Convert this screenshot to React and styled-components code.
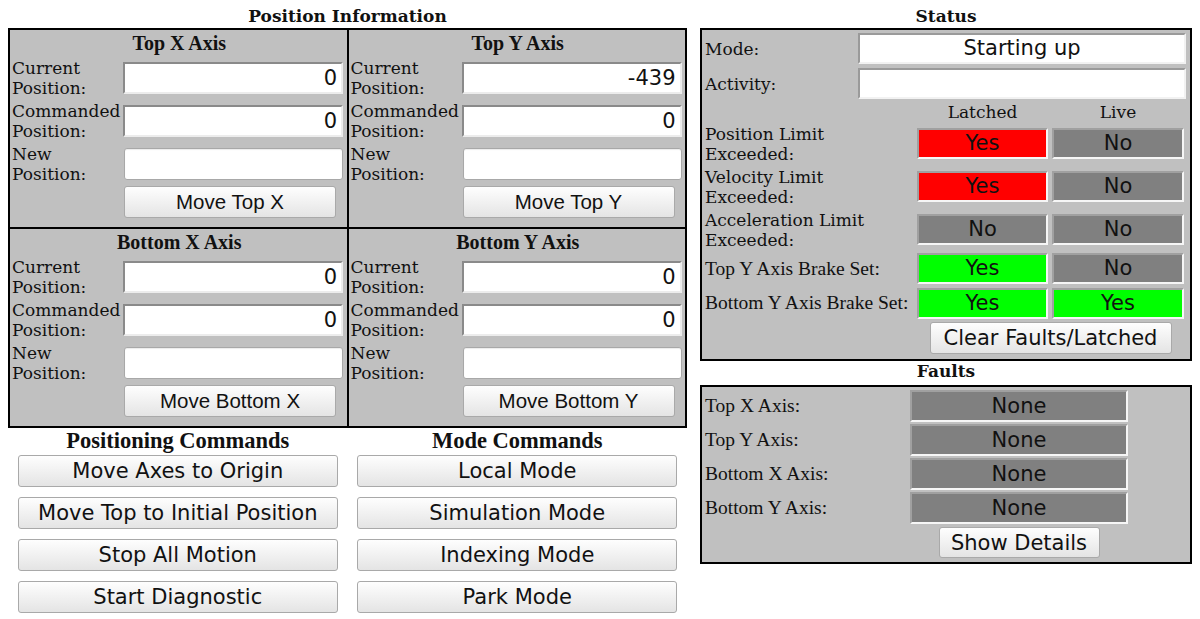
import React from 'react';
import styled, { createGlobalStyle, css } from 'styled-components';

const GlobalStyle = createGlobalStyle`
  html, body {
    margin: 0;
    padding: 0;
    background: #ffffff;
    color: #111111;
    font-family: "DejaVu Serif", serif;
  }
`;

const SERIF = '"DejaVu Serif", serif';
const TIMES = '"Liberation Serif", "Times New Roman", serif';
const SANS = '"DejaVu Sans", sans-serif';
const ARIAL = '"Liberation Sans", Arial, sans-serif';

const Page = styled.div`
  display: flex;
  align-items: flex-start;
  gap: 13px;
  padding: 6px 8px 0 8px;
`;

const LeftColumn = styled.div`
  width: 679px;
  display: flex;
  flex-direction: column;
`;

const RightColumn = styled.div`
  width: 492px;
  display: flex;
  flex-direction: column;
`;

const SectionTitle = styled.div`
  font-family: ${SERIF};
  font-weight: bold;
  font-size: 17px;
  text-align: center;
  height: ${(p) => p.$height || 22}px;
  line-height: 20px;
`;

const AxisGrid = styled.div`
  display: grid;
  grid-template-columns: 1fr 1fr;
  gap: 2px;
  background: #000;
  border: 2px solid #000;
`;

const AxisCell = styled.div`
  background: #c0c0c0;
  height: 197px;
  padding-left: 2px;
  box-sizing: border-box;
`;

const AxisTitle = styled.div`
  font-family: ${TIMES};
  font-weight: bold;
  font-size: 20px;
  text-align: center;
  height: 26px;
  line-height: 27px;
`;

const FieldRow = styled.div`
  display: grid;
  grid-template-columns: 111px 220px;
  align-items: center;
  height: ${(p) => p.$height || 43}px;
`;

const FieldLabel = styled.div`
  font-family: ${SERIF};
  font-size: 17px;
  line-height: 20px;
`;

const insetBorder = css`
  border-style: solid;
  border-width: 2px;
  border-color: #8a8a8a #ececec #ececec #8a8a8a;
`;

const Readout = styled.div`
  ${insetBorder};
  box-sizing: border-box;
  height: 32px;
  background: #fff;
  font-family: ${SANS};
  font-size: 21px;
  line-height: 28px;
  text-align: right;
  padding-right: 4px;
`;

const EntryInput = styled.input`
  box-sizing: border-box;
  width: 219px;
  height: 32px;
  margin-left: 1px;
  border: 1px solid #a8a8a8;
  border-radius: 3px;
  background: #fff;
  box-shadow: inset 0 1px 1px rgba(0, 0, 0, 0.08);
  font-family: ${SANS};
  font-size: 21px;
  padding: 0 4px;
  outline: none;
`;

const Button = styled.button`
  box-sizing: border-box;
  width: ${(p) => p.$width}px;
  height: ${(p) => p.$height || 32}px;
  margin: 0;
  padding: 0;
  border: 1px solid #a9a9a9;
  border-radius: 3px;
  background: linear-gradient(#fefefe, #e4e4e4);
  color: #111;
  font-family: ${(p) => (p.$arial ? ARIAL : SANS)};
  font-size: ${(p) => (p.$arial ? 20.5 : 21)}px;
  cursor: pointer;
  justify-self: ${(p) => p.$justify || 'start'};
  &:hover {
    background: linear-gradient(#ffffff, #ececec);
  }
`;

const AxisButton = styled(Button)`
  grid-column: 2;
  margin-left: 1px;
`;

const WideButton = styled(Button)`
  grid-column: 2 / 4;
`;

const CommandsGrid = styled.div`
  display: grid;
  grid-template-columns: 1fr 1fr;
`;

const CommandColumn = styled.div`
  display: flex;
  flex-direction: column;
  align-items: center;
  gap: 10px;
`;

const CommandTitle = styled.div`
  font-family: ${TIMES};
  font-weight: bold;
  font-size: 22.5px;
  height: 25px;
  line-height: 25px;
  margin-bottom: -8px;
`;

const Box = styled.div`
  border: 2px solid #000;
  background: #c0c0c0;
  padding: ${(p) => p.$padding};
`;

const ModeRow = styled.div`
  display: grid;
  grid-template-columns: 153px 328px;
  align-items: center;
  height: 35px;
`;

const ModeField = styled.div`
  ${insetBorder};
  border-color: #9a9a9a #f2f2f2 #f2f2f2 #9a9a9a;
  box-sizing: border-box;
  height: 31px;
  background: #fff;
  font-family: ${SANS};
  font-size: 21px;
  line-height: 27px;
  text-align: center;
`;

const StatusRow = styled.div`
  display: grid;
  grid-template-columns: 208px 131px 132px;
  column-gap: 4px;
  align-items: center;
  height: ${(p) => p.$height}px;
`;

const StatusLabel = styled.div`
  font-family: ${(p) => (p.$times ? TIMES : SERIF)};
  font-size: ${(p) => (p.$times ? 19.5 : 17)}px;
  line-height: ${(p) => (p.$times ? 22 : 20)}px;
  white-space: nowrap;
`;

const ColumnHead = styled.div`
  font-family: ${SERIF};
  font-size: 17px;
  text-align: center;
`;

const stateColors = {
  red: '#ff0000',
  green: '#00ff00',
  off: '#808080',
};

const Indicator = styled.div`
  box-sizing: border-box;
  height: ${(p) => p.$height || 31}px;
  border-style: solid;
  border-width: 2px;
  border-color: #a0a0a0 #f6f6f6 #f6f6f6 #a0a0a0;
  background: ${(p) => stateColors[p.$state]};
  font-family: ${SANS};
  font-size: 21px;
  line-height: ${(p) => (p.$height || 31) - 4}px;
  text-align: center;
  color: #111;
`;

const FaultRow = styled.div`
  display: grid;
  grid-template-columns: 205px 218px;
  align-items: center;
  height: ${(p) => p.$height || 34}px;
`;

const axes = [
  { name: 'Top X Axis', current: '0', commanded: '0', button: 'Move Top X' },
  { name: 'Top Y Axis', current: '-439', commanded: '0', button: 'Move Top Y' },
  { name: 'Bottom X Axis', current: '0', commanded: '0', button: 'Move Bottom X' },
  { name: 'Bottom Y Axis', current: '0', commanded: '0', button: 'Move Bottom Y' },
];

const positioningCommands = [
  'Move Axes to Origin',
  'Move Top to Initial Position',
  'Stop All Motion',
  'Start Diagnostic',
];

const modeCommands = ['Local Mode', 'Simulation Mode', 'Indexing Mode', 'Park Mode'];

const limits = [
  { label: ['Position Limit', 'Exceeded:'], latched: 'red', live: 'off', height: 43 },
  { label: ['Velocity Limit', 'Exceeded:'], latched: 'red', live: 'off', height: 43 },
  { label: ['Acceleration Limit', 'Exceeded:'], latched: 'off', live: 'off', height: 43 },
  { label: ['Top Y Axis Brake Set:'], latched: 'green', live: 'off', height: 35, times: true },
  { label: ['Bottom Y Axis Brake Set:'], latched: 'green', live: 'green', height: 34, times: true },
];

const faults = ['Top X Axis:', 'Top Y Axis:', 'Bottom X Axis:', 'Bottom Y Axis:'];

const yesNo = (state) => (state === 'off' ? 'No' : 'Yes');

const AxisPanel = ({ axis }) => (
  <AxisCell>
    <AxisTitle>{axis.name}</AxisTitle>
    <FieldRow>
      <FieldLabel>Current<br />Position:</FieldLabel>
      <Readout>{axis.current}</Readout>
    </FieldRow>
    <FieldRow>
      <FieldLabel>Commanded<br />Position:</FieldLabel>
      <Readout>{axis.commanded}</Readout>
    </FieldRow>
    <FieldRow>
      <FieldLabel>New<br />Position:</FieldLabel>
      <EntryInput type="text" />
    </FieldRow>
    <FieldRow $height={34}>
      <AxisButton $arial $width={212}>{axis.button}</AxisButton>
    </FieldRow>
  </AxisCell>
);

const App = () => {
  return (
    <>
      <GlobalStyle />
      <Page>
        <LeftColumn>
          <SectionTitle>Position Information</SectionTitle>
          <AxisGrid>
            {axes.map((axis) => (
              <AxisPanel key={axis.name} axis={axis} />
            ))}
          </AxisGrid>
          <CommandsGrid>
            <CommandColumn>
              <CommandTitle>Positioning Commands</CommandTitle>
              {positioningCommands.map((c) => (
                <Button key={c} $width={320}>{c}</Button>
              ))}
            </CommandColumn>
            <CommandColumn>
              <CommandTitle>Mode Commands</CommandTitle>
              {modeCommands.map((c) => (
                <Button key={c} $width={320}>{c}</Button>
              ))}
            </CommandColumn>
          </CommandsGrid>
        </LeftColumn>

        <RightColumn>
          <SectionTitle>Status</SectionTitle>
          <Box $padding="1px 4px 3px 3px">
            <ModeRow>
              <StatusLabel>Mode:</StatusLabel>
              <ModeField>Starting up</ModeField>
            </ModeRow>
            <ModeRow>
              <StatusLabel>Activity:</StatusLabel>
              <ModeField />
            </ModeRow>
            <StatusRow $height={21}>
              <span />
              <ColumnHead>Latched</ColumnHead>
              <ColumnHead>Live</ColumnHead>
            </StatusRow>
            {limits.map((row) => (
              <StatusRow key={row.label.join(' ')} $height={row.height}>
                <StatusLabel $times={row.times}>
                  {row.label.map((line, i) => (
                    <React.Fragment key={line}>
                      {i > 0 && <br />}
                      {line}
                    </React.Fragment>
                  ))}
                </StatusLabel>
                <Indicator $state={row.latched}>{yesNo(row.latched)}</Indicator>
                <Indicator $state={row.live}>{yesNo(row.live)}</Indicator>
              </StatusRow>
            ))}
            <StatusRow $height={36}>
              <span />
              <WideButton $width={242} $justify="center">
                Clear Faults/Latched
              </WideButton>
            </StatusRow>
          </Box>
          <SectionTitle $height={24}>Faults</SectionTitle>
          <Box $padding="2px 3px 2px 3px">
            {faults.map((f) => (
              <FaultRow key={f}>
                <StatusLabel $times>{f}</StatusLabel>
                <Indicator $state="off" $height={32}>None</Indicator>
              </FaultRow>
            ))}
            <FaultRow $height={35}>
              <span />
              <Button $width={161} $height={31} $justify="center">Show Details</Button>
            </FaultRow>
          </Box>
        </RightColumn>
      </Page>
    </>
  );
};

export default App;
